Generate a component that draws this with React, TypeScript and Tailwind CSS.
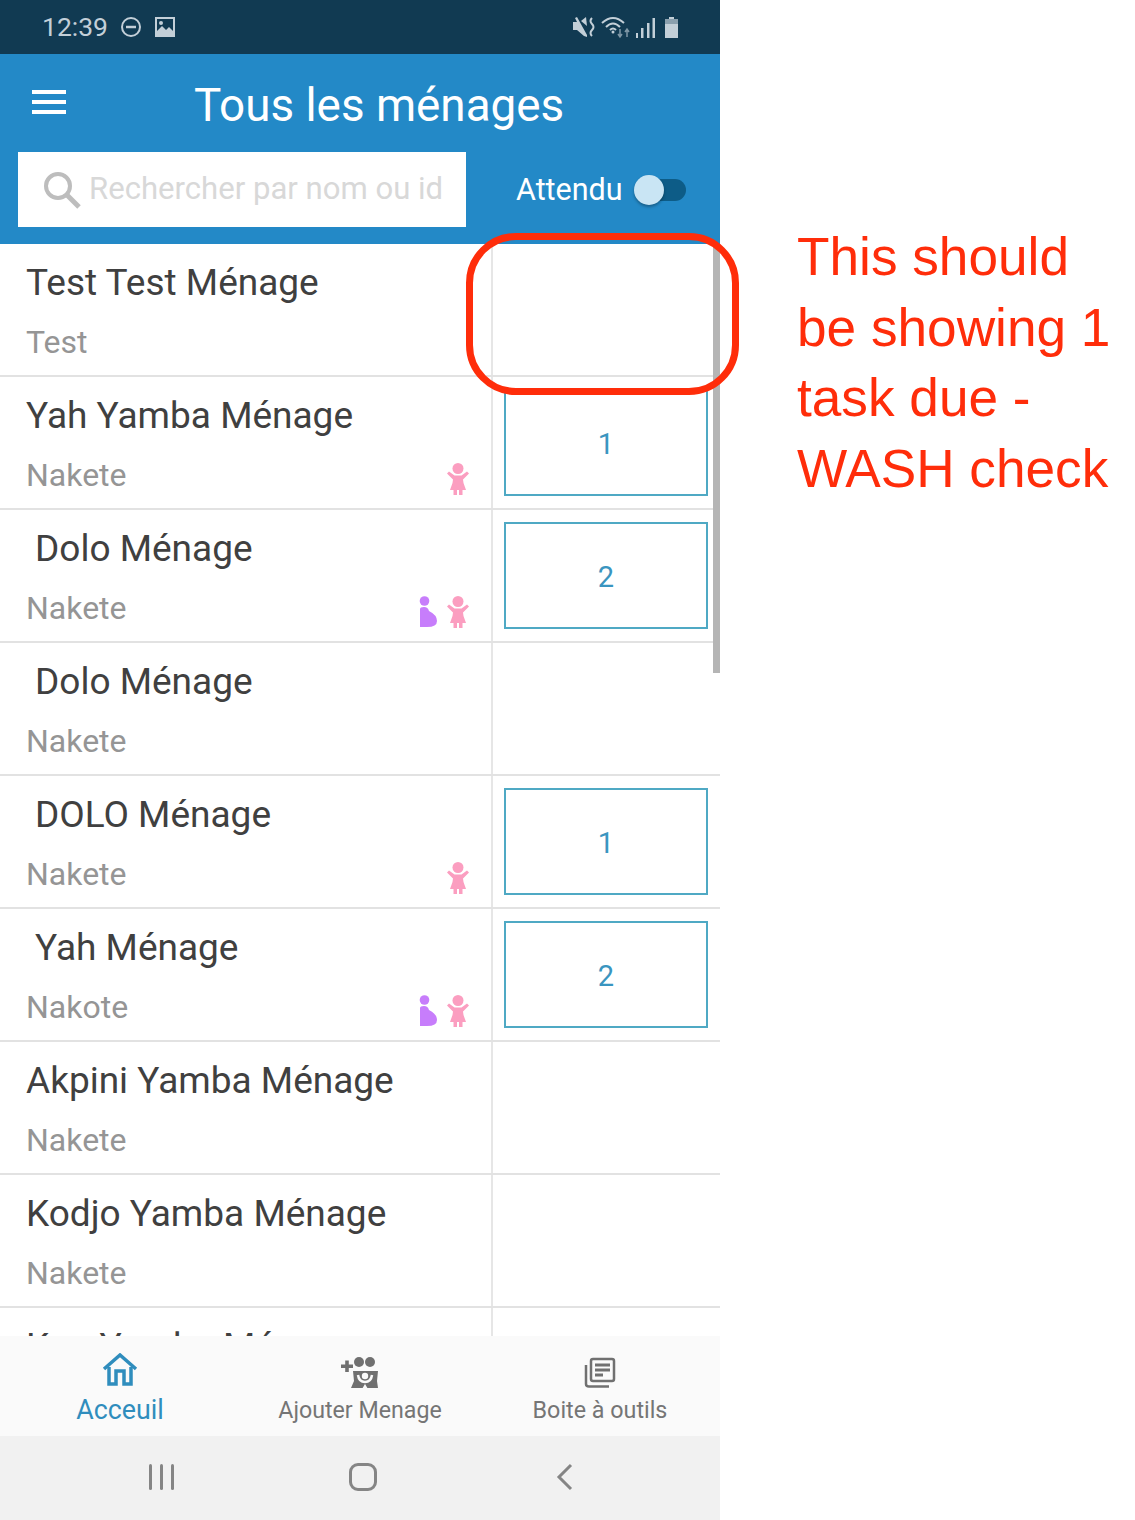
import React from "react";

const rows = [
  { name: "Test Test Ménage", sub: "Test", indent: false, count: "", preg: false, child: false },
  { name: "Yah Yamba Ménage", sub: "Nakete", indent: false, count: "1", preg: false, child: true },
  { name: "Dolo Ménage", sub: "Nakete", indent: true, count: "2", preg: true, child: true },
  { name: "Dolo Ménage", sub: "Nakete", indent: true, count: "", preg: false, child: false },
  { name: "DOLO Ménage", sub: "Nakete", indent: true, count: "1", preg: false, child: true },
  { name: "Yah Ménage", sub: "Nakote", indent: true, count: "2", preg: true, child: true },
  { name: "Akpini Yamba Ménage", sub: "Nakete", indent: false, count: "", preg: false, child: false },
  { name: "Kodjo Yamba Ménage", sub: "Nakete", indent: false, count: "", preg: false, child: false },
  { name: "Kou Yamba Ménage", sub: "Nakete", indent: false, count: "", preg: false, child: false },
];

function Child() {
  return (
    <svg width="22" height="32" viewBox="0 0 22 32" fill="#fb9ec0">
      <circle cx="11" cy="5.500" r="5.500" />
      <path d="M0 10.500 L2 8.500 L7.500 12.500 H14.500 L20 8.500 L22 10.500 L16 16.500 L16.500 20 L19 27 H15.500 V32 H12 V27 H10 V32 H6.500 V27 H3 L5.500 20 L6 16.500 Z" />
    </svg>
  );
}

function Pregnant() {
  return (
    <svg width="18" height="32" viewBox="0 0 18 32" fill="#c77dfb">
      <circle cx="5.500" cy="5" r="4.800" />
      <path d="M1 13 Q1 11 5 11 Q9 11 10 15 Q18 19 18 25 Q18 31 8 31 H1 Z" />
    </svg>
  );
}

function Row({ r }: { r: (typeof rows)[number] }) {
  return (
    <div className="flex h-[133px] shrink-0 border-b-2 border-[#e2e2e2]">
      <div className="relative w-[493px] shrink-0 border-r-2 border-[#e6e6e6]">
        <div className={`pt-[15px] text-[37px] leading-[48px] text-[#404040] ${r.indent ? "pl-[35px]" : "pl-[26px]"}`}>{r.name}</div>
        <div className="pl-[26px] pt-[16px] text-[32px] leading-[38px] text-[#959595]">{r.sub}</div>
        <div className="absolute bottom-[13px] right-[22px] flex items-end gap-[10px]">
          {r.preg && <Pregnant />}
          {r.child && <Child />}
        </div>
      </div>
      <div className="flex-1 pl-[11px] pr-[12px] pt-[12px]">
        {r.count && (
          <div className="flex h-[107px] items-center justify-center border-2 border-[#4fa9c4] pt-[4px] text-[29px] text-[#3a95c0]">{r.count}</div>
        )}
      </div>
    </div>
  );
}

export default function App() {
  return (
    <div className="relative flex h-[1520px] w-[1135px] overflow-hidden bg-white font-['Roboto',sans-serif]">
      <div className="relative flex h-full w-[720px] shrink-0 flex-col">
        {/* status bar */}
        <div className="flex h-[54px] shrink-0 items-center justify-between bg-[#113a52] pl-[42px] pr-[41px] text-[#c3cfd8]">
          <div className="flex items-center gap-[12px]">
            <span className="text-[26.500px] leading-none">12:39</span>
            <svg width="22" height="22" viewBox="0 0 22 22" fill="none" stroke="currentColor" strokeWidth="2">
              <circle cx="11" cy="11" r="9" />
              <path d="M6 11 H16" strokeWidth="2.500" />
            </svg>
            <svg width="22" height="22" viewBox="0 0 22 22" fill="currentColor">
              <path fillRule="evenodd" d="M1 1 H21 V21 H1 Z M3 3 V15 L8 10 L12 14 L15 11 L19 15 V3 Z" />
              <circle cx="7" cy="7" r="2" />
            </svg>
          </div>
          <div className="flex items-center gap-[5px]">
            <svg width="24" height="24" viewBox="0 0 24 24" fill="currentColor">
              <path d="M1 7 H5 L3 3 L5 2 L15 20 L15 22 L12 21 L5 15 H1 Z" />
              <path d="M9 6 L14 2 L15 11 Z" />
              <path d="M20 3 Q17 6 20 9 Q23 12 20 15 Q17 18 20 21" fill="none" stroke="currentColor" strokeWidth="2" />
            </svg>
            <svg width="30" height="24" viewBox="0 0 30 24" fill="none" stroke="currentColor" strokeWidth="2">
              <path d="M1 8 Q12 -2 23 8" />
              <path d="M5 12 Q12 5 19 12" />
              <path d="M9 15 Q12 12 15 15" />
              <circle cx="12" cy="17" r="1.500" fill="currentColor" stroke="none" />
              <path d="M19 14 V22 M17 19 L19 22 L21 19" stroke="#7f97a6" strokeWidth="1.500" />
              <path d="M26 22 V14 M24 17 L26 14 L28 17" stroke="#7f97a6" strokeWidth="1.500" />
            </svg>
            <svg width="20" height="24" viewBox="0 0 20 24" fill="currentColor">
              <rect x="0" y="18" width="2" height="5" />
              <rect x="5" y="13" width="2.500" height="10" />
              <rect x="11" y="8" width="2.500" height="15" />
              <rect x="16.500" y="3" width="2.500" height="20" />
            </svg>
            <svg width="15" height="24" viewBox="0 0 15 24" fill="currentColor" className="ml-[3px]">
              <path d="M5 2 H10 V4 H14 V23 H1 V4 H5 Z" />
              <rect x="1" y="4" width="13" height="5" fill="#8ba0ae" />
            </svg>
          </div>
        </div>
        {/* header */}
        <div className="h-[190px] shrink-0 bg-[#2389c7]">
          <div className="flex h-[98px] items-start pl-[32px]">
            <div className="mt-[36px] flex w-[34px] flex-col gap-[6px]">
              <span className="h-[4px] bg-white" />
              <span className="h-[4px] bg-white" />
              <span className="h-[4px] bg-white" />
            </div>
            <div className="ml-[128px] mt-[21px] text-[45.800px] leading-[62px] text-white">Tous les ménages</div>
          </div>
          <div className="flex items-center">
            <div className="ml-[18px] flex h-[75px] w-[448px] items-center bg-white pl-[25px]">
              <svg width="40" height="40" viewBox="0 0 40 40" fill="none" stroke="#bdbdbd" className="shrink-0">
                <circle cx="15" cy="16" r="12" strokeWidth="4" />
                <path d="M24 25 L36 37" strokeWidth="5" />
              </svg>
              <span className="ml-[6px] whitespace-nowrap text-[31.100px] text-[#d8d8d8]">Rechercher par nom ou id</span>
            </div>
            <span className="ml-[50px] text-[30.500px] text-white">Attendu</span>
            <div className="relative ml-[11px] h-[22px] w-[52px]">
              <div className="absolute right-0 top-0 h-[22px] w-[40px] rounded-full bg-[#0d5c87]" />
              <div className="absolute left-0 top-[-4px] h-[30px] w-[30px] rounded-full bg-[#c9e5f4] shadow-[0_2px_3px_rgba(0,0,0,0.3)]" />
            </div>
          </div>
        </div>
        {/* list */}
        <div className="relative flex min-h-0 flex-1 flex-col overflow-hidden">
          {rows.map((r, i) => (
            <Row key={i} r={r} />
          ))}
          <div className="absolute right-0 top-0 h-[429px] w-[7px] bg-[#b5b5b5]" />
        </div>
        {/* tabs */}
        <div className="grid h-[100px] shrink-0 grid-cols-3 bg-[#fafafa]">
          <div className="flex flex-col items-center pt-[17px] text-[#2f8dbd]">
            <svg width="36" height="34" viewBox="0 0 36 34" fill="none" stroke="#2f8dbd">
              <path d="M2 16 L18 2 L34 16" strokeWidth="3.500" />
              <path d="M7 14 V31 H14 V18 H22 V31 H29 V14" strokeWidth="3.500" />
            </svg>
            <span className="mt-[5px] text-[26.800px] leading-[36px]">Acceuil</span>
          </div>
          <div className="flex flex-col items-center pt-[21px] text-[#757575]">
            <svg width="40" height="32" viewBox="0 0 40 32" fill="#707070">
              <path d="M1 7.500 H13 V11 H1 Z M5.200 3.500 H8.800 V15 H5.200 Z" />
              <circle cx="19" cy="5" r="5" />
              <circle cx="30" cy="5" r="5" />
              <path d="M13 14 H38 L37 24 L38 31 H11 L14 24 Z" />
              <path d="M18 18 Q19 25 25 25 Q31 25 32 18" fill="none" stroke="#fafafa" strokeWidth="2.500" />
              <path d="M22 32 L25 27 L28 32 Z" fill="#fafafa" />
              <circle cx="25" cy="19" r="3.200" fill="#fafafa" />
            </svg>
            <span className="mt-[5px] text-[23.200px] leading-[32px]">Ajouter Menage</span>
          </div>
          <div className="flex flex-col items-center pt-[21px] text-[#757575]">
            <svg width="32" height="31" viewBox="0 0 32 31" fill="none" stroke="#707070">
              <rect x="7" y="2" width="23" height="22" rx="2" strokeWidth="2.500" />
              <path d="M2 8 V27 Q2 29.500 5 29.500 H25" strokeWidth="2.500" />
              <path d="M11 8 H26 M11 13 H26 M11 18 H19" strokeWidth="3" />
            </svg>
            <span className="mt-[6px] text-[23.300px] leading-[32px]">Boite à outils</span>
          </div>
        </div>
        {/* system nav */}
        <div className="flex h-[84px] shrink-0 items-center bg-[#f1f1f1] pb-[2px]">
          <div className="ml-[149px] flex gap-[8px]">
            <span className="h-[26px] w-[3px] rounded bg-[#858585]" />
            <span className="h-[26px] w-[3px] rounded bg-[#858585]" />
            <span className="h-[26px] w-[3px] rounded bg-[#858585]" />
          </div>
          <div className="ml-[175px] h-[28px] w-[28px] rounded-[9px] border-[3px] border-[#858585]" />
          <svg width="18" height="28" viewBox="0 0 18 28" fill="none" stroke="#858585" strokeWidth="3" className="ml-[179px]">
            <path d="M15 2 L3 14 L15 26" />
          </svg>
        </div>
      </div>
      {/* annotation */}
      <div className="pl-[77px] pt-[222px] font-['Liberation_Sans',sans-serif] text-[53.200px] leading-[70.500px] text-[#ff2d0a]">
        <div className="whitespace-nowrap">This should</div>
        <div className="whitespace-nowrap">be showing 1</div>
        <div className="whitespace-nowrap">task due -</div>
        <div className="whitespace-nowrap">WASH check</div>
      </div>
      <div className="absolute left-[466px] top-[233px] h-[162px] w-[273px] rounded-[50px] border-[7px] border-[#ff2d0a]" />
    </div>
  );
}
